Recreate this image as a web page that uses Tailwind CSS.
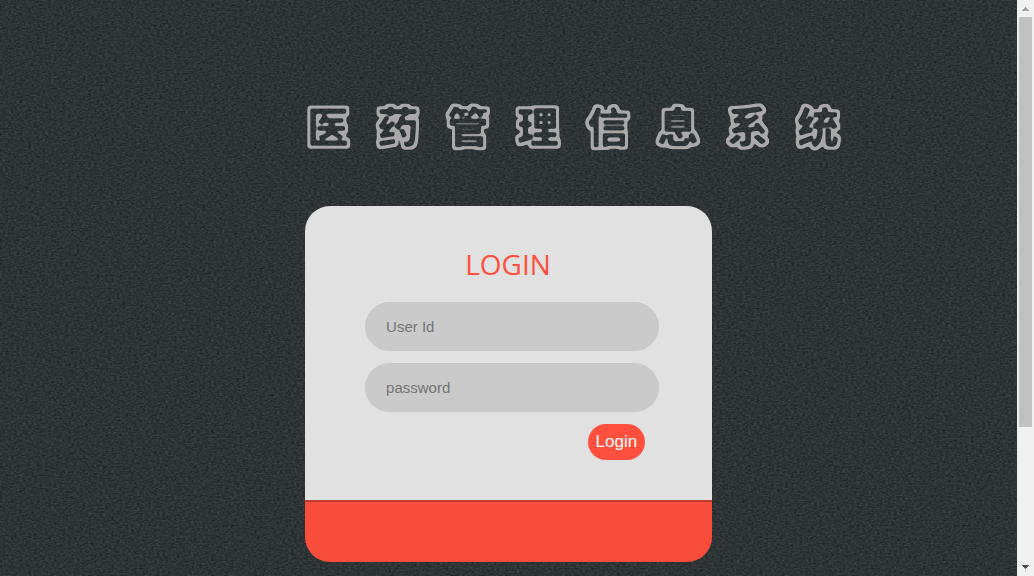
<!DOCTYPE html>
<html lang="zh-CN">
<head>
<meta charset="utf-8">
<meta name="viewport" content="width=device-width, initial-scale=1">
<title>医药管理信息系统</title>
<script src="https://cdn.jsdelivr.net/npm/@tailwindcss/browser@4"></script>
</head>
<body class="flex h-screen overflow-hidden bg-[#2d3436] font-['Liberation_Sans',Arial,sans-serif]">
<!-- Woven fabric backdrop -->
<svg class="absolute inset-0 -z-10 size-full" aria-hidden="true">
  <filter id="weave" x="0" y="0" width="100%" height="100%" color-interpolation-filters="sRGB">
    <feTurbulence type="fractalNoise" baseFrequency="0.35 0.6" numOctaves="2" seed="4"/>
    <feColorMatrix values="0.16 0.08 0 0 0.062  0.16 0.08 0 0 0.085  0.16 0.08 0 0 0.092  0 0 0 0 1"/>
  </filter>
  <!-- Hollow, rounded lettering: a grown copy of the glyphs minus the glyphs -->
  <filter id="hollow" x="-5%" y="-20%" width="110%" height="140%" color-interpolation-filters="sRGB">
    <feMorphology in="SourceAlpha" operator="dilate" radius="2"/>
    <feGaussianBlur stdDeviation="1.8"/>
    <feComponentTransfer result="outer"><feFuncA type="linear" slope="5" intercept="-1.1"/></feComponentTransfer>
    <feGaussianBlur in="SourceAlpha" stdDeviation="0.8"/>
    <feComponentTransfer result="inner"><feFuncA type="linear" slope="3.5" intercept="-1.6"/></feComponentTransfer>
    <feFlood flood-color="#a9a9a9"/>
    <feComposite in2="outer" operator="in"/>
    <feComposite in2="inner" operator="out"/>
  </filter>
  <rect width="100%" height="100%" filter="url(#weave)"/>
</svg>
<main class="min-w-0 flex-1">
  <div class="mx-auto w-[40%] pt-[88px]">
    <h1 class="flex h-[74px] w-max items-center gap-6 text-center text-[42px] leading-none font-black whitespace-nowrap [filter:url(#hollow)] font-['Noto_Sans_CJK_SC',sans-serif]">
      <span class="w-[46px]">医</span><span class="w-[46px]">药</span><span class="w-[46px]">管</span><span class="w-[46px]">理</span><span class="w-[46px]">信</span><span class="w-[46px]">息</span><span class="w-[46px]">系</span><span class="w-[46px]">统</span>
    </h1>
    <section class="mt-11 overflow-hidden rounded-[25px]">
      <form class="flex h-[294px] flex-col bg-[#e1e1e1] pt-[38px] pr-[53px] pl-[60px]" onsubmit="return false">
        <h2 class="pr-2 text-center text-[28px] leading-10 text-[#ff4f3e] font-['Open_Sans',sans-serif]">LOGIN</h2>
        <input type="text" aria-label="User Id" placeholder="User Id" class="mt-[18px] h-[49px] w-full rounded-full border border-[#c8c8c8] bg-[#cacaca] px-5 text-[15px] text-[#333] outline-none placeholder:text-[#757575]">
        <input type="password" aria-label="password" placeholder="password" class="mt-3 h-[49px] w-full rounded-full border border-[#c8c8c8] bg-[#cacaca] px-5 text-[15px] text-[#333] outline-none placeholder:text-[#757575]">
        <button type="submit" class="mt-3 mr-[14px] h-9 w-[57px] self-end rounded-full bg-[#ff4f3e] text-center text-[17px] text-white">Login</button>
      </form>
      <footer class="h-[62px] border-t-2 border-[#c23c2e] bg-[#f84d3b]"></footer>
    </section>
  </div>
</main>
<!-- Scroll track -->
<aside class="flex w-[17px] shrink-0 flex-col items-center bg-[#f1f1f1]" aria-hidden="true">
  <svg class="size-[17px] shrink-0" viewBox="0 0 17 17" fill="#a3a3a3" shape-rendering="crispEdges"><path d="M8 7h1v1h1v1h1v1h1v1H5v-1h1V9h1V8h1z"/></svg>
  <div class="h-[410px] w-[13px] bg-[#c1c1c1]"></div>
  <svg class="mt-auto size-[17px] shrink-0" viewBox="0 0 17 17" fill="#505050" shape-rendering="crispEdges"><path d="M5 6h7v1h-1v1h-1v1H9v1H8V9H7V8H6V7H5z"/></svg>
</aside>
</body>
</html>
